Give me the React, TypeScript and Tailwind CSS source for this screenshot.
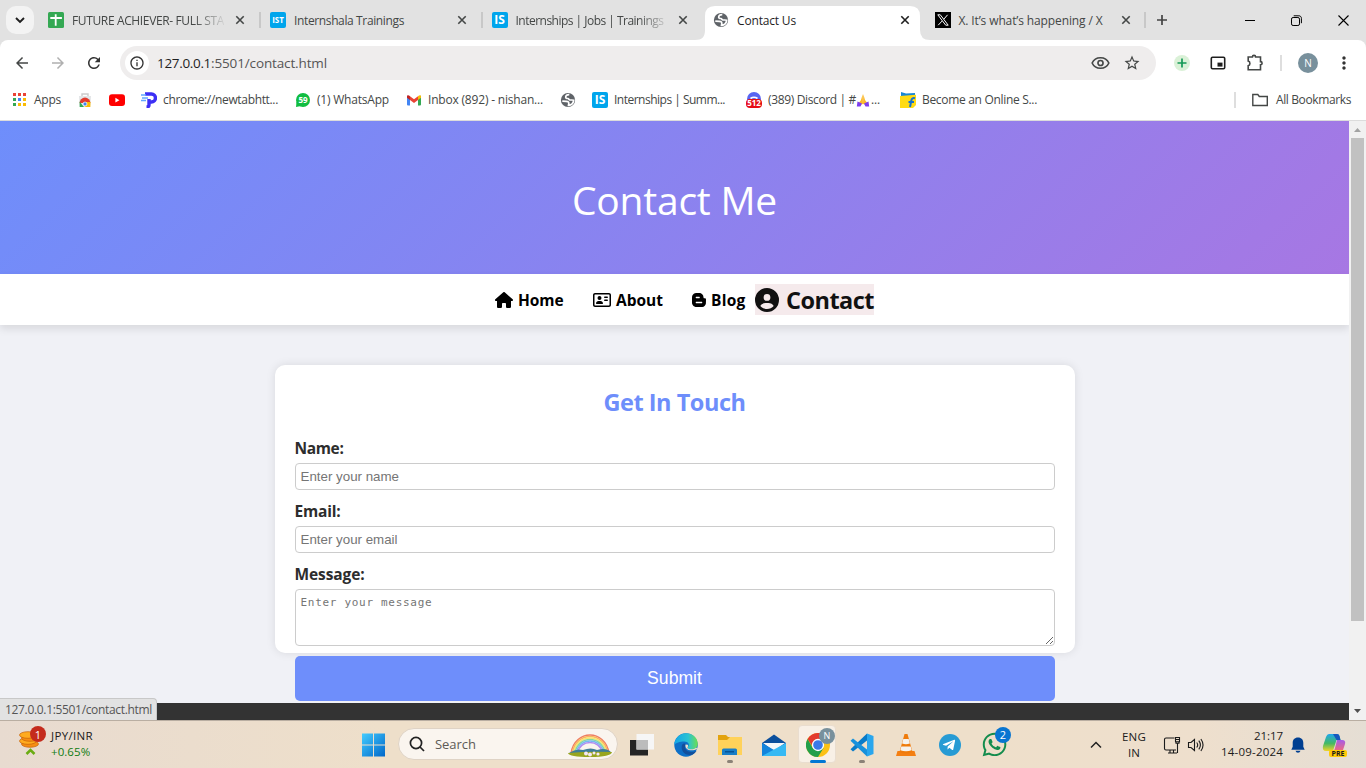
import React, { useLayoutEffect, useRef, useState } from 'react';
import { FaHouse, FaRegAddressCard, FaBloggerB, FaCircleUser } from 'react-icons/fa6';
import { FaTelegramPlane, FaWhatsapp } from 'react-icons/fa';
import { MdInfoOutline, MdRefresh, MdArrowBack, MdArrowForward, MdStarBorder, MdMoreVert } from 'react-icons/md';

/* Text run that spreads its letters to fill the given width. */
function Fit({ w, children, className = '' }: { w: number; children: string; className?: string }) {
  const ref = useRef<HTMLSpanElement>(null);
  const [spacing, setSpacing] = useState(0);
  useLayoutEffect(() => {
    if (ref.current) {
      const natural = ref.current.getBoundingClientRect().width;
      setSpacing((w - natural) / Array.from(children).length);
    }
  }, []);
  return (
    <span ref={ref} className={`inline-block shrink-0 whitespace-pre ${className}`} style={{ letterSpacing: spacing }}>
      {children}
    </span>
  );
}

function Cross({ className = '' }: { className?: string }) {
  return (
    <svg viewBox="0 0 10 10" className={`h-[10px] w-[10px] ${className}`} fill="none" stroke="currentColor" strokeWidth="1.6">
      <path d="M1.3 1.3l7.4 7.4M8.7 1.3L1.3 8.7" />
    </svg>
  );
}

function Globe() {
  return (
    <svg viewBox="0 0 16 16" className="h-4 w-4">
      <circle cx="8" cy="8" r="7.1" fill="#5f6368" />
      <path d="M9.3 2.6C7 2.5 5.6 3.7 5.7 5.2c.1 1.3 1.1 1.3 2.3 1.3.8 0 .9 1.4 1.9 1.5 1.2.1 2.3-.2 3.8.2-.3 2.7-2.2 5-5.2 5.2l.3-1.9c.2-1.4-.9-2.1-2.4-2.2L2.3 9.1" fill="none" stroke="#fff" strokeWidth="1.7" />
    </svg>
  );
}

function ISIcon({ label }: { label: string }) {
  return (
    <span className={`flex h-4 w-4 items-center justify-center rounded-[2px] bg-[#00a5ec] font-['Open_Sans',sans-serif] font-bold leading-none text-white ${label.length > 2 ? 'text-[8px]' : 'text-[12px]'}`}>
      {label}
    </span>
  );
}

function SheetIcon() {
  return (
    <svg viewBox="0 0 16 16" className="h-4 w-4">
      <rect width="16" height="16" rx="1.5" fill="#34a853" />
      <path d="M7.7 2.2v11.6M2.3 6h11.6" stroke="#fff" strokeWidth="1.8" />
    </svg>
  );
}

function XIcon() {
  return (
    <svg viewBox="0 0 16 16" className="h-4 w-4">
      <rect width="16" height="16" fill="#000" />
      <path d="M2.8 2.8h2.5l7.9 10.4h-2.5zM12.6 2.8L8.8 7.2M7 9.1l-3.8 4.1" stroke="#fff" strokeWidth="1" fill="none" />
    </svg>
  );
}

function Tab({ icon, text, w, active, fade }: { icon: React.ReactNode; text: string; w: number; active?: boolean; fade?: boolean }) {
  return (
    <div className={`relative flex h-[34px] w-[221.5px] shrink-0 items-center pb-[6px] ${active ? 'text-[#1f1f1f]' : 'text-[#444746]'}`}>
      {active && (
        <svg viewBox="0 0 235 34" className="absolute -left-[10px] top-0 h-[34px] w-[235px]">
          <path d="M0 34C7 34 10 31 10 24V10Q10 0 20 0H215Q225 0 225 10V24Q225 34 235 34Z" fill="#fff" />
        </svg>
      )}
      <div className="relative ml-2 h-4 w-4 shrink-0">{icon}</div>
      <div className={`relative ml-2 mt-px w-[152px] shrink-0 text-[12px] leading-4 ${fade ? '[mask-image:linear-gradient(90deg,#000_80%,transparent_102%)]' : ''}`}>
        <Fit w={w}>{text}</Fit>
      </div>
      <Cross className="relative ml-[10.500px] shrink-0" />
    </div>
  );
}

function Bookmark({ icon, text, w }: { icon: React.ReactNode; text?: string; w?: number }) {
  return (
    <div className="flex h-4 items-center gap-[6px]">
      <div className="h-4 w-4 shrink-0">{icon}</div>
      {text && <Fit w={w ?? 50}>{text}</Fit>}
    </div>
  );
}

const appsColors = ['#ea4335', '#ea4335', '#ea4335', '#34a853', '#4285f4', '#fbbc04', '#34a853', '#fbbc04', '#fbbc04'];

function TabStrip() {
  return (
    <div className="relative flex h-10 items-start bg-[#e2e2e2] pt-[6px]">
      <div className="ml-[6px] mr-[6px] flex h-7 w-7 shrink-0 items-center justify-center rounded-[10px] bg-[#f3f3f3]">
        <svg viewBox="0 0 10 10" className="h-[10px] w-[10px]" fill="none" stroke="#1f1f1f" strokeWidth="1.9"><path d="M1 3l4 4 4-4" /></svg>
      </div>
      <Tab icon={<SheetIcon />} text="FUTURE ACHIEVER- FULL STA" w={152} fade />
      <i className="-ml-[3px] mr-[1.500px] mt-[6px] h-4 w-[2px] bg-[#c8c8c8]" />
      <Tab icon={<ISIcon label="IST" />} text="Internshala Trainings" w={110} />
      <i className="-ml-[2.500px] mr-[0.500px] mt-[6px] h-4 w-[2px] bg-[#c8c8c8]" />
      <Tab icon={<ISIcon label="IS" />} text="Internships | Jobs | Trainings" w={148} fade />
      <Tab icon={<Globe />} text="Contact Us" w={59} active />
      <Tab icon={<XIcon />} text="X. It’s what’s happening / X" w={144} />
      <i className="-ml-[4px] mt-[6px] h-4 w-[2px] bg-[#c8c8c8]" />
      <svg viewBox="0 0 12 12" className="ml-[10px] mt-2 h-3 w-3" stroke="#444" strokeWidth="1.7"><path d="M6 1v10M1 6h10" /></svg>
      <div className="ml-auto mr-[17px] mt-2 flex h-3 items-center gap-[36px]">
        <svg viewBox="0 0 10 10" className="h-[10px] w-[10px]" stroke="#000"><path d="M0 5.5h10" /></svg>
        <svg viewBox="0 0 11 11" className="h-[11px] w-[11px]" fill="none" stroke="#000"><rect x=".5" y="2.5" width="8" height="8" rx="1.6" /><path d="M2.7.8h5.2c1.5 0 2.5 1 2.5 2.5v4.9" /></svg>
        <svg viewBox="0 0 11 11" className="h-[11px] w-[11px]" stroke="#000" strokeWidth="1.1"><path d="M.5.5l10 10M10.500.5l-10 10" /></svg>
      </div>
    </div>
  );
}

function Toolbar() {
  return (
    <div className="flex h-[40px] items-center rounded-t-[8px] bg-white pt-[6px]">
      <MdArrowBack className="ml-[13px] h-[18px] w-[18px] text-[#444746]" />
      <MdArrowForward className="ml-[18px] h-[18px] w-[18px] text-[#b0b0b0]" />
      <MdRefresh className="ml-[18px] h-[18px] w-[18px] text-[#333]" />
      <div className="ml-[17px] flex h-[34px] w-[1036px] items-center rounded-full bg-[#efeded] pl-[5px]">
        <div className="flex h-6 w-6 items-center justify-center rounded-full bg-white"><MdInfoOutline className="h-4 w-4 text-[#333]" /></div>
        <div className="ml-2 flex text-[13.5px] leading-5">
          <Fit w={54} className="text-[#1f1f1f]">127.0.0.1</Fit>
          <Fit w={116} className="text-[#555]">:5501/contact.html</Fit>
        </div>
        <svg viewBox="0 0 20 14" className="ml-auto h-[14px] w-[19px]" fill="none" stroke="#444746" strokeWidth="1.7"><path d="M1.200 7C4.500-.4 15.500-.4 18.800 7 15.500 14.400 4.500 14.400 1.200 7Z" /><circle cx="10" cy="7" r="2.700" /></svg>
        <MdStarBorder className="ml-[13px] mr-[15px] h-[18px] w-[18px] text-[#444746]" />
      </div>
      <svg viewBox="0 0 16 16" className="ml-[18px] h-4 w-4"><circle cx="8" cy="8" r="8" fill="#daf1d7" /><path d="M8 3.500v9M3.500 8h9" stroke="#159957" strokeWidth="1.700" /></svg>
      <svg viewBox="0 0 16 14" className="ml-5 h-[14px] w-4"><rect x="1.300" y="1.300" width="13.400" height="11.400" rx="1.200" fill="none" stroke="#1f1f1f" strokeWidth="1.600" /><rect x="7.500" y="6.600" width="5" height="4" fill="#1f1f1f" /></svg>
      <svg viewBox="0 0 18 18" className="ml-[20px] h-[18px] w-[18px]" fill="none" stroke="#444746" strokeWidth="1.600"><path d="M2.200 3H6.400a1.600 1.600 0 013.200 0h4.900v4.600a1.600 1.600 0 010 3.200v5H2.200v-4.100a2.400 2.400 0 000-4.600Z" /></svg>
      <i className="ml-[16px] h-4 w-[2px] bg-[#dedede]" />
      <div className="ml-4 flex h-5 w-5 items-center justify-center rounded-full bg-[#78909c] text-[10px] leading-none text-white">N</div>
      <MdMoreVert className="ml-[16px] h-5 w-5 text-[#333]" />
    </div>
  );
}

function Bookmarks() {
  return (
    <div className="flex h-[41px] justify-between border-b border-[#dcdcdc] bg-white text-[12px] leading-4 text-[#444746]">
      <div className="grid h-10 grid-cols-[65px_32px_32px_154px_111px_154px_32px_154px_154px_154px] items-center pl-3">
        <Bookmark text="Apps" w={27} icon={<div className="grid grid-cols-[repeat(3,3px)] gap-[2px] p-px">{appsColors.map((c, i) => <i key={i} className="h-[3px] w-[3px]" style={{ background: c }} />)}</div>} />
        <Bookmark icon={<svg viewBox="0 0 16 16" className="h-4 w-4"><path d="M5 4V2h6v2" fill="none" stroke="#ccc" strokeWidth="1.400" /><path d="M2 4h12l-.7 11H2.700z" fill="#e3e5e7" /><path d="M2.600 11a5.400 5.400 0 0110.800 0z" fill="#e33b2e" /><path d="M2.600 9.500L7 15H2.700z" fill="#34a853" /><path d="M9 10h4.500l-.2 5H7.500z" fill="#fbbc04" /><circle cx="8" cy="12" r="2" fill="#4285f4" stroke="#fff" strokeWidth=".7" /></svg>} />
        <Bookmark icon={<svg viewBox="0 0 16 16" className="h-4 w-4"><rect y="2.300" width="16" height="11.700" rx="3" fill="#f00" /><path d="M6.400 5.800v4.800l4-2.400z" fill="#fff" /></svg>} />
        <Bookmark text="chrome://newtabhtt..." w={115} icon={<svg viewBox="0 0 16 16" className="h-4 w-4"><path d="M4 2h6.500a4 4 0 010 8H8M8 7v6q0 2-2.500 2" fill="none" stroke="#3c2ff5" strokeWidth="3.400" /><path d="M0 3h5M1 6h6M0 8.500h5" stroke="#62a6ff" strokeWidth="1.400" /><path d="M7 6h3" stroke="#fff" strokeWidth="1.500" /></svg>} />
        <Bookmark text="(1) WhatsApp" w={72} icon={<svg viewBox="0 0 16 16" className="h-4 w-4"><circle cx="8" cy="8" r="7" fill="#10bd41" /><path d="M1.500 10L1 15l5-1" fill="#10bd41" /><text x="8" y="11" textAnchor="middle" fontSize="8" fontWeight="700" fill="#fff" fontFamily="Open Sans, sans-serif">59</text></svg>} />
        <Bookmark text="Inbox (892) - nishan..." w={115} icon={<svg viewBox="0 0 16 16" className="h-4 w-4"><path d="M1 3.500L4 5.500V13.500H2q-1 0-1-1z" fill="#4285f4" /><path d="M15 3.500L12 5.500V13.500h2q1 0 1-1z" fill="#34a853" /><path d="M4 4.200l4 3 4-3V8l-4 3-4-3z" fill="#ea4335" /><path d="M12 4.200l1-.8q2-.9 2 1.200v1.100L12 8z" fill="#fbbc04" /><path d="M4 4.200l-1-.8q-2-.9-2 1.200v1.100L4 8z" fill="#c5221f" /></svg>} />
        <Bookmark icon={<Globe />} />
        <Bookmark text="Internships | Summ..." w={111} icon={<ISIcon label="IS" />} />
        <div className="flex h-4 items-center gap-[6px]">
          <svg viewBox="0 0 16 16" className="h-4 w-4"><circle cx="8" cy="7" r="7" fill="#5865f2" /><path d="M4.500 6.500q3.500-2.500 7 0" fill="none" stroke="#fff" strokeWidth="1.700" /><rect y="7" width="16" height="9" rx="4" fill="#e60d16" /><text x="8" y="14.300" textAnchor="middle" fontSize="8" fontWeight="700" fill="#fff" fontFamily="Open Sans, sans-serif">512</text></svg>
          <div className="flex items-center"><Fit w={88}>(389) Discord | #</Fit>
            <svg viewBox="0 0 14 14" className="h-[14px] w-[14px]"><path d="M6.700 1L7 11l-4 1-1-1 3-4zM7.300 1L7 11l4 1 1-1-3-4z" fill="#fbb829" /><path d="M1.500 8.500l4.500 2-1.500 3H.8zM12.500 8.500l-4.500 2 1.500 3h3.700z" fill="#7c3df0" /></svg>
            <Fit w={9} className="ml-px">...</Fit></div>
        </div>
        <Bookmark text="Become an Online S..." w={115} icon={<svg viewBox="0 0 16 16" className="h-4 w-4"><path d="M1 0l5 1.500L15 1v4H1z" fill="#1787d5" /><path d="M0 4l16-1.200V13l-3 3H0z" fill="#ffdb13" /><path d="M15 6.300q-3-1-3.600 2L10 15M8.500 10h5.500" fill="none" stroke="#1772ce" strokeWidth="2" /></svg>} />
      </div>
      <div className="mr-[15px] flex h-10 items-center">
        <i className="h-4 w-[2px] bg-[#dedede]" />
        <svg viewBox="0 0 16 14" className="ml-[16px] h-[14px] w-4" fill="none" stroke="#444746" strokeWidth="1.400"><path d="M.8 1.500h5l1.500 2h8v9H.8z" /></svg>
        <Fit w={75} className="ml-2">All Bookmarks</Fit>
      </div>
    </div>
  );
}

const field = "h-[27px] shrink-0 rounded-[4px] border border-[#ccc] px-[5px] font-['Liberation_Sans',sans-serif] text-[13.333px] placeholder:text-[#757575]";
const label = 'h-[26px] shrink-0 text-[15.5px] font-bold leading-[22px]';

function ContactPage() {
  return (
    <div className="flex h-full w-[1349px] flex-col overflow-hidden bg-[#f0f1f6]">
      <header className="flex h-[153px] shrink-0 items-center justify-center bg-[linear-gradient(135deg,#6e8efb,#a777e3)] pt-[3px] text-[39px] leading-none text-white">
        <h1><Fit w={205}>Contact Me</Fit></h1>
      </header>
      <nav className="relative grid h-[51px] shrink-0 grid-cols-[98px_99px_63px_119px] items-center bg-white pl-[495px] text-[15.5px] font-bold text-black shadow-[0_4px_8px_rgba(0,0,0,0.1)]">
        <a className="flex items-center"><FaHouse className="h-4 w-[18px]" /><Fit w={45.5} className="ml-[5px] pt-[2px]">Home</Fit></a>
        <a className="flex items-center"><FaRegAddressCard className="h-[16px] w-[18px]" /><Fit w={47} className="ml-[5px] pt-[2px]">About</Fit></a>
        <a className="flex items-center"><FaBloggerB className="-ml-px h-4 w-4" /><Fit w={34.5} className="ml-1 pt-[2px]">Blog</Fit></a>
        <a className="flex h-[31px] items-center bg-[#f5eaec] text-[23.5px] leading-none text-[#111]"><FaCircleUser className="h-6 w-6 shrink-0" /><Fit w={88} className="ml-[7px] pt-[2px]">Contact</Fit></a>
      </nav>
      <main className="h-[378px] shrink-0 pt-10">
        <section className="mx-auto flex h-[288px] w-[800px] flex-col rounded-[10px] bg-white px-5 text-[#2d2d2d] shadow-[0_0_10px_rgba(0,0,0,0.1)]">
          <h2 className="mt-[21px] h-[33px] shrink-0 text-center text-[23.5px] font-bold leading-8 text-[#6e8efb]"><Fit w={142}>Get In Touch</Fit></h2>
          <label className={`mt-[18px] ${label}`}><Fit w={49}>Name:</Fit></label>
          <input className={field} placeholder="Enter your name" />
          <label className={`mt-[10px] ${label}`}><Fit w={46}>Email:</Fit></label>
          <input className={field} placeholder="Enter your email" />
          <label className={`mt-[10px] ${label}`}><Fit w={70}>Message:</Fit></label>
          <textarea className="h-[57px] shrink-0 resize-y rounded-[4px] border border-[#ccc] px-[5px] py-[5px] font-['DejaVu_Sans_Mono',monospace] text-[11px] leading-4 tracking-[0.7px] placeholder:text-[#757575]" placeholder="Enter your message" />
          <button className="mt-[10px] h-[45px] shrink-0 rounded-[5px] bg-[#6e8efb] font-['Liberation_Sans',sans-serif] text-[17.6px] text-white">Submit</button>
        </section>
      </main>
      <footer className="h-[17px] shrink-0 bg-[#333]" />
    </div>
  );
}

function Scrollbar() {
  return (
    <div className="flex w-[17px] flex-col items-center bg-[#f1f1f1]">
      <svg viewBox="0 0 17 17" className="h-[17px] w-[17px] shrink-0"><path d="M5 11l3.500-4 3.500 4z" fill="#a3a3a3" /></svg>
      <div className="h-[483px] w-[13px] bg-[#c1c1c1]" />
      <svg viewBox="0 0 17 17" className="mt-auto h-[17px] w-[17px] shrink-0"><path d="M5 6l3.500 4 3.500-4z" fill="#505050" /></svg>
    </div>
  );
}

function Cell({ children, mark }: { children: React.ReactNode; mark?: 'dot' | 'on' }) {
  return (
    <div className="relative flex h-[47px] w-11 shrink-0 items-center justify-center">
      {mark === 'on' && <i className="absolute left-[2px] top-1 h-[38px] w-[38px] rounded-[4px] border border-[#e9ddcf] bg-[#f8f0e6]" />}
      <div className="relative flex h-6 w-6 items-center justify-center">{children}</div>
      {mark === 'dot' && <i className="absolute bottom-[5px] left-[19px] h-[3px] w-[6px] rounded-full bg-[#8b8277]" />}
      {mark === 'on' && <i className="absolute bottom-[5px] left-[14px] h-[3px] w-4 rounded-full bg-[#0078d4]" />}
    </div>
  );
}

function Rainbow() {
  const bands = ['#ee7d63', '#fab55f', '#f7e66b', '#86d8a0', '#75b8f3', '#ae8bf0'];
  return (
    <svg viewBox="0 0 46 24" className="h-6 w-[46px]" fill="none">
      {bands.map((c, i) => <path key={c} d={`M${4 + i * 1.3} 19C${8 + i} ${-5 + i * 2} ${38 - i} ${-5 + i * 2} ${42 - i * 1.3} 19`} stroke={c} strokeWidth="1.4" />)}
      <path d="M2 19q7-5 14-3 8-3 14 0 9-3 14 2-3 3-20 3T2 19z" fill="#3f7d99" />
      <path d="M1 19q22-2 44-1-1 5-22 5T1 19z" fill="#98a51f" />
      <g fill="#f5e7f5"><circle cx="19" cy="19.500" r="2" /><circle cx="23" cy="20.500" r="2" /><circle cx="27" cy="19" r="1.500" /><circle cx="31" cy="20" r="1.600" /></g>
    </svg>
  );
}

function Taskbar() {
  return (
    <div className="flex h-12 border-t border-[#b9aea2] bg-[linear-gradient(90deg,#e8dbd0,#eedfca_28%,#eedfca_72%,#eedfcd_88%,#e5ded4)] text-[#1b1b1b]">
      <div className="flex w-[351px] items-start pl-[18px] pt-[5px]">
        <div className="relative h-[30px] w-7">
          <svg viewBox="0 0 28 30" className="h-[30px] w-7"><g stroke="#c56208" strokeWidth=".7"><ellipse cx="12" cy="18" rx="8.500" ry="3.300" fill="#f68d13" /><ellipse cx="10" cy="15" rx="8.500" ry="3.300" fill="#ffab1f" /><ellipse cx="12" cy="12" rx="8.500" ry="3.300" fill="#f68d13" /><ellipse cx="10" cy="9" rx="8.500" ry="3.300" fill="#ffab1f" /></g><path d="M8.500 28l4-4 4 4" fill="none" stroke="#6aac12" strokeWidth="2.500" /></svg>
          <b className="absolute right-0 top-0 flex h-4 w-4 items-center justify-center rounded-full bg-[#c42b1c] text-[11px] font-normal leading-none text-white">1</b>
        </div>
        <div className="ml-[5px] mt-[2px] flex flex-col text-[11.5px] leading-4"><Fit w={42}>JPY/INR</Fit><Fit w={40} className="text-[#0f7b0f]">+0.65%</Fit></div>
      </div>
      <Cell><svg viewBox="0 0 24 24" className="h-6 w-6"><defs><linearGradient id="win" x1="0" y1="0" x2="1" y2="1"><stop stopColor="#44ccff" /><stop offset="1" stopColor="#0067c9" /></linearGradient></defs><path d="M1 .5h11v11H1zM13 .5h11v11H13zM1 12.500h11v11H1zM13 12.500h11v11H13z" fill="url(#win)" /></svg></Cell>
      <div className="ml-[3px] mt-[7px] flex h-8 w-[220px] items-center rounded-full border border-[#dfd3c5] bg-[#faf5ef] pl-[10px]">
        <svg viewBox="0 0 16 16" className="h-4 w-4" fill="none" stroke="#222" strokeWidth="1.700"><circle cx="7" cy="7" r="5.600" /><path d="M11 11l4 4" /></svg>
        <Fit w={41} className="ml-[10px] mt-px text-[13px] text-[#5d5a56]">Search</Fit>
        <div className="ml-auto mr-[4px] mt-[3px]"><Rainbow /></div>
      </div>
      <div className="ml-[2px] flex">
        <Cell><svg viewBox="0 0 24 24" className="h-6 w-6"><rect y="7" width="18" height="15.500" fill="#252525" /><rect x="6.500" y="1" width="17.500" height="15.500" fill="#f6f6f6" /><rect x="6.500" y="7" width="11.500" height="9.500" fill="#bcbcbc" /></svg></Cell>
        <Cell><svg viewBox="0 0 24 24" className="h-6 w-6"><defs><linearGradient id="edge" x1="0" x2="1"><stop stopColor="#13a5e8" /><stop offset=".6" stopColor="#2bc3d2" /><stop offset="1" stopColor="#6cdf4f" /></linearGradient></defs><circle cx="12" cy="12" r="11.700" fill="#0d6fc7" /><path d="M.3 12C.3 5.500 5.500.3 12 .3S23.700 5 23.700 10.500c0 4.500-3.500 6-6.500 6-3.500 0-4.200-1.500-3-3 1.500-2 .2-5-4-5S1.500 10 .3 12z" fill="url(#edge)" /><path d="M8 12c-1.500 5 2 10 8 10 3 0 5-2 6.500-4-5 2-12 1-11.500-5 .2-1.500 1-2 1-2-1.500-1-3.300-.5-4 1z" fill="#124f9b" /><path d="M11.500 11.500c-1 5 5 7.500 12 4.500l-1.300-1.500c-2 2-6 2.500-8.200 1-1.300-1 .8-2-.2-3.800z" fill="#eedfca" /></svg></Cell>
        <Cell mark="dot"><svg viewBox="0 0 24 24" className="h-6 w-6"><path d="M0 2h8l2 2h14v18H0z" fill="#e3a30f" /><path d="M0 7h9l3-3h12v18H0z" fill="#ffd25a" /><path d="M4 22v-5q0-1.500 1.500-1.500h12q1.500 0 1.500 1.500v5z" fill="#197ec7" /><path d="M7 18h9v1.500H7z" fill="#075497" /></svg></Cell>
        <Cell><svg viewBox="0 0 24 24" className="h-6 w-6"><path d="M0 10L12 1.500 24 10v13H0z" fill="#0b4f9d" /><path d="M1 10h22l-11 8z" fill="#f5f7fa" /><path d="M0 10l12 7-9 6H0z" fill="#1384dc" /><path d="M24 10v13H0z" fill="#36b9f3" /></svg></Cell>
        <Cell mark="on"><svg viewBox="0 0 24 24" className="h-6 w-6"><circle cx="12" cy="12" r="12" fill="#fbc116" /><path d="M1.600 6A12 12 0 0122.400 6H12L9 17z" fill="#e33b2e" /><path d="M1.600 6A12 12 0 0012 24l5.500-9-10.500.5z" fill="#229f4b" /><circle cx="12" cy="12" r="5.500" fill="#3b79e8" stroke="#fff" strokeWidth="1.300" /></svg><span className="absolute -right-[5px] -top-[5px] flex h-4 w-4 items-center justify-center rounded-full bg-[#78909c] text-[9px] text-white">N</span></Cell>
        <Cell mark="dot"><svg viewBox="0 0 24 24" className="h-6 w-6"><path d="M17 .5L23.500 3v18L17 23.500z" fill="#29a6ed" /><path d="M17 .5v7L3 18.500.5 16.300z" fill="#087bc9" /><path d="M17 23.500v-7L3 5.500.5 7.700z" fill="#1791dc" /></svg></Cell>
        <Cell><svg viewBox="0 0 24 24" className="h-6 w-6"><path d="M3.500 18h17l1.500 5H2z" fill="#f47f12" /><path d="M10.500 1h3l5 18q-6.500 3-13 0z" fill="#ef7b0b" /><path d="M9.300 6h5.400l1.200 4.500q-4 1.500-7.800 0zM7.300 13.500h9.400l1 3.800q-5.700 2-11.400 0z" fill="#f6f2ed" /></svg></Cell>
        <Cell><div className="flex h-[22px] w-[22px] items-center justify-center rounded-full bg-[#279bd4]"><FaTelegramPlane className="mr-[2px] h-[14px] w-[14px] text-white" /></div></Cell>
        <Cell><FaWhatsapp className="h-[27px] w-[27px] shrink-0 text-[#138c4d]" /><span className="absolute -right-[5px] -top-[6px] flex h-4 w-4 items-center justify-center rounded-full bg-[#0875d1] text-[11px] leading-none text-white">2</span></Cell>
      </div>
      <div className="ml-auto mr-[20px] flex items-center text-[11.5px] leading-4">
        <svg viewBox="0 0 12 12" className="h-3 w-3" fill="none" stroke="#222" strokeWidth="1.500"><path d="M1 8.500l5-5 5 5" /></svg>
        <div className="ml-5 flex w-6 flex-col items-center"><Fit w={24}>ENG</Fit><Fit w={12}>IN</Fit></div>
        <svg viewBox="0 0 18 18" className="ml-[17px] h-[18px] w-[18px]" fill="none" stroke="#1b1b1b" strokeWidth="1.100"><path d="M11.500 2H3Q1.500 2 1.500 3.500v9Q1.500 14 3 14h10M5 17h9M7 14v3M10.500 14v3M12.500 1.500h4v4.200h-4zM13 5.700v1.500h3V5.700M14.500 7.500v9.500M12.500 3.500h4" /></svg>
        <svg viewBox="0 0 18 18" className="ml-[6px] h-[18px] w-[18px]" fill="none" stroke="#1b1b1b" strokeWidth="1.100"><path d="M1.500 6.500h2.500L7.500 3.500v11L4 11.500H1.500zM9.700 6.500q2 2.500 0 5M11.800 4.600q3.200 4.400 0 8.800M13.900 3q4.300 6 0 12" /></svg>
        <div className="ml-[16px] flex w-[62px] flex-col items-end pb-[2px]"><Fit w={29}>21:17</Fit><Fit w={62}>14-09-2024</Fit></div>
        <svg viewBox="0 0 14 16" className="ml-[8px] h-4 w-[14px]" fill="#003f91"><path d="M7 .5c3.500 0 5.300 2.300 5.300 5.300v4l1.400 3H.3l1.400-3v-4C1.700 2.800 3.500.5 7 .5zM4.500 13.700h5q-.5 2-2.500 2t-2.500-2z" /></svg>
        <div className="relative ml-[17px] h-6 w-6">
          <svg viewBox="0 0 24 24" className="h-6 w-6"><defs><linearGradient id="cpl" x1="0" y1="0" x2="0" y2="1"><stop stopColor="#20a7ee" /><stop offset=".55" stopColor="#44b964" /><stop offset="1" stopColor="#f2d329" /></linearGradient><linearGradient id="cpr" x1="0" y1="1" x2="0" y2="0"><stop stopColor="#ff6f63" /><stop offset="1" stopColor="#a55ce9" /></linearGradient></defs><path d="M7 1h8q2 0 2.500 2l1 4h-4L11 18H4q-4 0-3-5L4 4q1-3 3-3z" fill="url(#cpl)" /><path d="M11 1h4q2 0 2.500 2l1 4h-4z" fill="#1658bd" /><path d="M15 7h5q4 0 3 4l-2 6q-1 3-4 3H9q3-1 4-5z" fill="url(#cpr)" /></svg>
          <b className="absolute -right-px bottom-0 flex h-[7px] w-[18px] items-center justify-center rounded-[2px] bg-[#ffca08] text-[7px] leading-none">PRE</b>
        </div>
      </div>
    </div>
  );
}

export default function App() {
  return (
    <div className="h-[768px] w-[1366px] overflow-hidden font-['Open_Sans','Noto_Sans',sans-serif]">
      <TabStrip />
      <div className="bg-[#e2e2e2]"><Toolbar /></div>
      <Bookmarks />
      <div className="relative flex h-[599px]">
        <ContactPage />
        <Scrollbar />
        <div className="absolute bottom-0 left-0 flex h-[22px] w-[157px] items-center rounded-tr-[4px] border-r border-t border-[#c8c8c8] bg-[#e2e2e2] pl-[5px] text-[12px] text-[#555]"><Fit w={147}>127.0.0.1:5501/contact.html</Fit></div>
      </div>
      <Taskbar />
    </div>
  );
}
